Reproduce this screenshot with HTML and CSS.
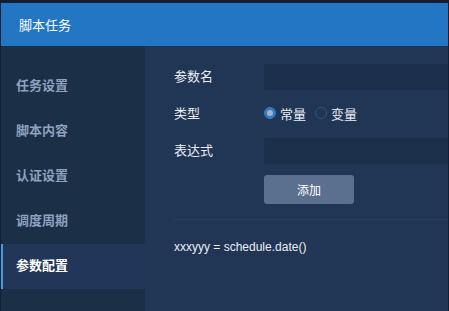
FILE: index.html
```html
<!DOCTYPE html>
<html lang="zh">
<head>
    <meta charset="UTF-8">
    <meta name="viewport" content="width=device-width, initial-scale=1.0">
    <title>脚本任务</title>
    <link rel="stylesheet" href="styles.css">
</head>
<body>
    <div class="window">
        <div class="header">脚本任务</div>
        <div class="layout">
            <ul class="side-menu">
                <li>任务设置</li>
                <li>脚本内容</li>
                <li>认证设置</li>
                <li>调度周期</li>
                <li class="active">参数配置</li>
            </ul>
            <div class="content">
                <div class="form-row">
                    <label>参数名</label>
                    <input type="text" class="field">
                </div>
                <div class="form-row">
                    <label>类型</label>
                    <div class="radios">
                        <span class="radio checked"></span><span class="radio-text">常量</span>
                        <span class="radio"></span><span class="radio-text">变量</span>
                    </div>
                </div>
                <div class="form-row">
                    <label>表达式</label>
                    <input type="text" class="field">
                </div>
                <div class="form-row actions">
                    <button class="add-btn">添加</button>
                </div>
                <div class="divider"></div>
                <div class="param-list">
                    <div class="param">xxxyyy = schedule.date()</div>
                </div>
            </div>
        </div>
    </div>
</body>
</html>
```

FILE: styles.css
```css
body {
    margin: 0;
    background-color: #141e30;
    font-family: "Liberation Sans", "Noto Sans CJK SC", sans-serif;
    font-size: 13px;
    color: #e9eef5;
}
.window {
    margin: 3px 1px 0 1px;
    height: 308px;
    display: flex;
    flex-direction: column;
    overflow: hidden;
}
.header {
    height: 43px;
    flex-shrink: 0;
    background-color: #2276c4;
    color: #fff;
    padding-left: 18px;
    display: flex;
    align-items: center;
}
.layout {
    flex: 1;
    display: flex;
}
.side-menu {
    list-style: none;
    margin: 0;
    padding: 18px 0 0 0;
    width: 144px;
    flex-shrink: 0;
    background-color: #1b2f47;
}
.side-menu li {
    height: 45px;
    line-height: 43px;
    padding-left: 13px;
    color: #8ea2bf;
    font-weight: bold;
    border-left: 2px solid transparent;
}
.side-menu li.active {
    background-color: #213658;
    color: #fff;
    border-left-color: #3a9fe6;
}
.content {
    flex: 1;
    background-color: #213554;
    padding: 18px 0 0 29px;
}
.form-row {
    display: flex;
    align-items: center;
    height: 26px;
    margin-bottom: 11px;
}
.form-row label {
    width: 90px;
    flex-shrink: 0;
    margin-top: -3px;
}
.field {
    flex: 1;
    height: 26px;
    margin: 0;
    border: none;
    border-radius: 2px 0 0 2px;
    background-color: #1c2f4b;
    outline: none;
    box-sizing: border-box;
}
.radios {
    display: flex;
    align-items: center;
    margin-top: -2px;
}
.radio {
    width: 12px;
    height: 12px;
    box-sizing: border-box;
    border-radius: 50%;
    border: 1px solid #3a5576;
    margin-right: 4px;
    display: flex;
    align-items: center;
    justify-content: center;
}
.radio.checked {
    background-color: #2f7cc5;
    border-color: #2f7cc5;
}
.radio.checked::after {
    content: "";
    width: 6px;
    height: 6px;
    border-radius: 50%;
    background-color: #a7b1be;
}
.radio-text {
    margin-right: 9px;
}
.actions {
    height: 29px;
    margin-top: 1px;
    margin-bottom: 0;
    padding-left: 90px;
}
.add-btn {
    width: 90px;
    height: 29px;
    border: none;
    border-radius: 3px;
    background-color: #5b6f8f;
    color: #fff;
    font-family: "Liberation Sans", "Noto Sans CJK SC", sans-serif;
    font-size: 12px;
}
.divider {
    height: 1px;
    background-color: #2c405e;
    margin-top: 15px;
}
.param-list {
    padding-top: 20px;
}
.param {
    font-size: 12px;
}
```
